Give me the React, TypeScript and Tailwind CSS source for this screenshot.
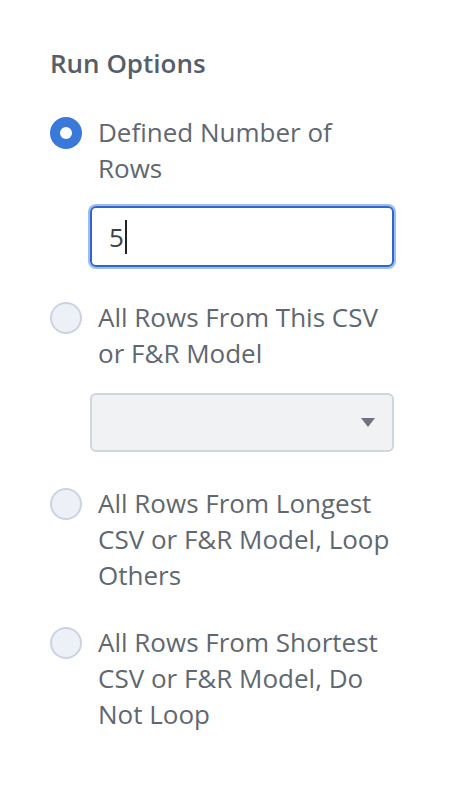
import { useState } from 'react'

const options = [
  { id: 'defined', label: 'Defined Number of Rows' },
  { id: 'this', label: 'All Rows From This CSV or F&R Model' },
  { id: 'longest', label: 'All Rows From Longest CSV or F&R Model, Loop Others' },
  { id: 'shortest', label: 'All Rows From Shortest CSV or F&R Model, Do Not Loop' },
]

function Radio({ checked }: { checked: boolean }) {
  return checked ? (
    <span className="mt-[3px] flex h-[32px] w-[32px] shrink-0 items-center justify-center rounded-full bg-[#3a78d9]">
      <span className="h-[12px] w-[12px] rounded-full bg-white" />
    </span>
  ) : (
    <span className="mt-[3px] block h-[32px] w-[32px] shrink-0 rounded-full border-2 border-[#cbd3e2] bg-[#edf0f7]" />
  )
}

function Option({
  label,
  checked,
  onSelect,
}: {
  label: string
  checked: boolean
  onSelect: () => void
}) {
  return (
    <button onClick={onSelect} className="flex items-start gap-[16px] text-left">
      <Radio checked={checked} />
      <span className="w-[297px] text-[26px] leading-[36px] text-[#5f6771]">{label}</span>
    </button>
  )
}

export default function App() {
  const [selected, setSelected] = useState('defined')

  return (
    <div className="min-h-[788px] w-[470px] bg-white pl-[50px] pt-[45px] font-['Open_Sans',sans-serif]">
      <h2 className="text-[26px] font-semibold leading-[36px] text-[#555e69]">Run Options</h2>

      <div className="mt-[33px] flex flex-col">
        <Option label={options[0].label} checked={selected === 'defined'} onSelect={() => setSelected('defined')} />
        <div className="ml-[40px] mt-[20px] flex h-[61px] w-[304px] items-center rounded-[6px] border-2 border-[#2f66c9] px-[17px] shadow-[0_0_0_2px_#9dbcf0]">
          <span className="text-[26px] leading-none text-[#3b4149]">5</span>
          <span className="ml-[1px] h-[34px] w-[2px] bg-[#222]" />
        </div>

        <div className="mt-[32px]">
          <Option label={options[1].label} checked={selected === 'this'} onSelect={() => setSelected('this')} />
        </div>
        <div className="ml-[40px] mt-[22px] flex h-[59px] w-[304px] items-center justify-end rounded-[6px] border-2 border-[#cfd6e0] bg-[#f1f2f4] pr-[17px]">
          <svg width="14" height="9" viewBox="0 0 14 9">
            <path d="M0 0 H14 L7 9 Z" fill="#6f7380" />
          </svg>
        </div>

        <div className="mt-[33px]">
          <Option label={options[2].label} checked={selected === 'longest'} onSelect={() => setSelected('longest')} />
        </div>

        <div className="mt-[31px]">
          <Option label={options[3].label} checked={selected === 'shortest'} onSelect={() => setSelected('shortest')} />
        </div>
      </div>
    </div>
  )
}
